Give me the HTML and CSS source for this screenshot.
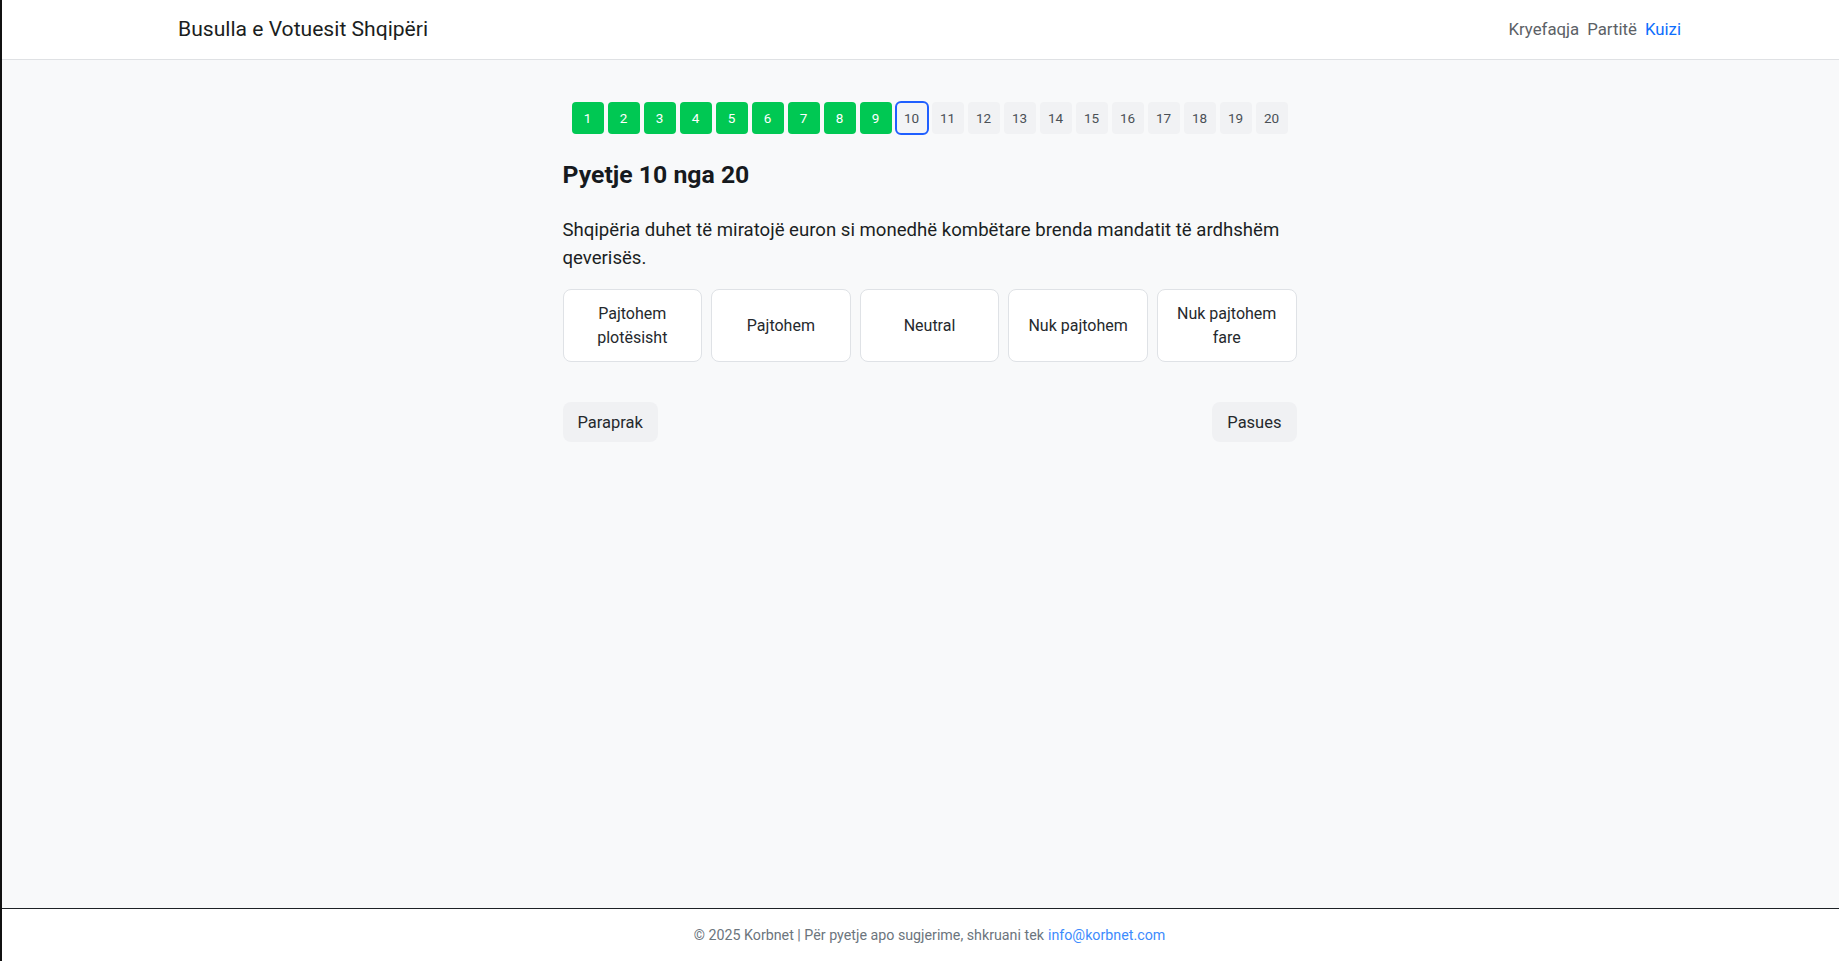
FILE: index.html
```html
<!DOCTYPE html>
<html lang="sq">
<head>
  <meta charset="UTF-8" />
  <meta name="viewport" content="width=device-width, initial-scale=1" />
  <title>Busulla e Votuesit Shqipëri - Kuizi</title>
  <link rel="stylesheet" href="styles.css">
</head>
<body>
  <!-- Top navigation -->
  <header class="topbar">
    <div class="container topbar-inner">
      <a class="brand" href="/">Busulla e Votuesit Shqipëri</a>
      <nav class="nav">
        <a href="/">Kryefaqja</a>
        <a href="/partite">Partitë</a>
        <a href="/kuizi" class="active">Kuizi</a>
      </nav>
    </div>
  </header>

  <!-- Quiz -->
  <main class="content">
    <div class="quiz">
      <div class="steps">
        <button class="step done">1</button>
        <button class="step done">2</button>
        <button class="step done">3</button>
        <button class="step done">4</button>
        <button class="step done">5</button>
        <button class="step done">6</button>
        <button class="step done">7</button>
        <button class="step done">8</button>
        <button class="step done">9</button>
        <button class="step current">10</button>
        <button class="step">11</button>
        <button class="step">12</button>
        <button class="step">13</button>
        <button class="step">14</button>
        <button class="step">15</button>
        <button class="step">16</button>
        <button class="step">17</button>
        <button class="step">18</button>
        <button class="step">19</button>
        <button class="step">20</button>
      </div>

      <h3 class="question-title">Pyetje 10 nga 20</h3>
      <p class="question-text">Shqipëria duhet të miratojë euron si monedhë kombëtare brenda mandatit të ardhshëm qeverisës.</p>

      <div class="answers">
        <button class="answer">Pajtohem plotësisht</button>
        <button class="answer">Pajtohem</button>
        <button class="answer">Neutral</button>
        <button class="answer">Nuk pajtohem</button>
        <button class="answer">Nuk pajtohem fare</button>
      </div>

      <div class="quiz-nav">
        <button class="btn-light">Paraprak</button>
        <button class="btn-light">Pasues</button>
      </div>
    </div>
  </main>

  <footer class="footer">
    © 2025 Korbnet | Për pyetje apo sugjerime, shkruani tek <a href="mailto:info@korbnet.com">info@korbnet.com</a>
  </footer>
</body>
</html>
```

FILE: styles.css
```css
/* Reset and global settings */
* {
  margin: 0;
  padding: 0;
  box-sizing: border-box;
}
html, body {
  height: 100%;
}
body {
  font-family: Roboto, "Liberation Sans", Arial, sans-serif;
  background-color: #f8f9fa;
  color: #212529;
  border-left: 2px solid #111;
  display: flex;
  flex-direction: column;
  overflow: hidden;
}
a {
  text-decoration: none;
}
button {
  font-family: inherit;
  cursor: pointer;
}

/* Containers are shifted a bit to the right like the original */
.container {
  box-sizing: content-box;
  width: 1503px;
  padding-left: 18px;
  margin: 0 auto;
}

/* Top navigation */
.topbar {
  background-color: #fff;
  border-bottom: 1px solid #dfe1e4;
  height: 60px;
  flex-shrink: 0;
}
.topbar-inner {
  height: 100%;
  display: flex;
  align-items: center;
  justify-content: space-between;
}
.brand {
  font-size: 21.1px;
  color: #1b1e21;
  padding-bottom: 2px;
}
.nav {
  display: flex;
  gap: 8px;
  padding-bottom: 2px;
}
.nav a {
  font-size: 16.8px;
  color: #5c6166;
}
.nav a.active {
  color: #0d6efd;
}

/* Main content */
.content {
  flex: 1;
}
.quiz {
  box-sizing: content-box;
  width: 734px;
  padding-left: 18px;
  margin: 0 auto;
  padding-top: 42px;
}

/* Question steps */
.steps {
  display: flex;
  justify-content: center;
  gap: 4px;
}
.step {
  width: 32px;
  height: 32px;
  border: none;
  border-radius: 4px;
  background-color: #f1f2f4;
  color: #4a5056;
  font-size: 13.5px;
}
.step.done {
  background-color: #00c853;
  color: #fff;
}
.step.current {
  background-color: #f3f4f6;
  outline: 2px solid #1f5fff;
  outline-offset: -1px;
  border-radius: 5px;
}

.question-title {
  font-size: 24.8px;
  font-weight: 700;
  line-height: 32px;
  margin-top: 25px;
  color: #161a1e;
}
.question-text {
  font-size: 18.6px;
  line-height: 28px;
  margin-top: 25px;
  color: #1b1f23;
}

/* Answer options */
.answers {
  display: grid;
  grid-template-columns: repeat(5, 1fr);
  gap: 9px;
  margin-top: 17px;
}
.answer {
  height: 73px;
  padding: 0 14px;
  background-color: #fff;
  border: 1px solid #dfe2e6;
  border-radius: 8px;
  font-size: 16px;
  line-height: 24px;
  color: #25292d;
}
.answer:hover {
  border-color: #b9bec4;
}

/* Previous / next */
.quiz-nav {
  display: flex;
  justify-content: space-between;
  margin-top: 40px;
}
.btn-light {
  height: 40px;
  padding: 0 15px;
  border: none;
  border-radius: 8px;
  background-color: #f0f1f3;
  color: #25292d;
  font-size: 16.5px;
}

/* Footer */
.footer {
  flex-shrink: 0;
  height: 53px;
  border-top: 1px solid #1d2226;
  background-color: #fff;
  padding-left: 18px;
  display: flex;
  align-items: center;
  justify-content: center;
  gap: 4px;
  font-size: 14.25px;
  color: #6c757d;
}
.footer a {
  color: #3d8bfd;
}
```
